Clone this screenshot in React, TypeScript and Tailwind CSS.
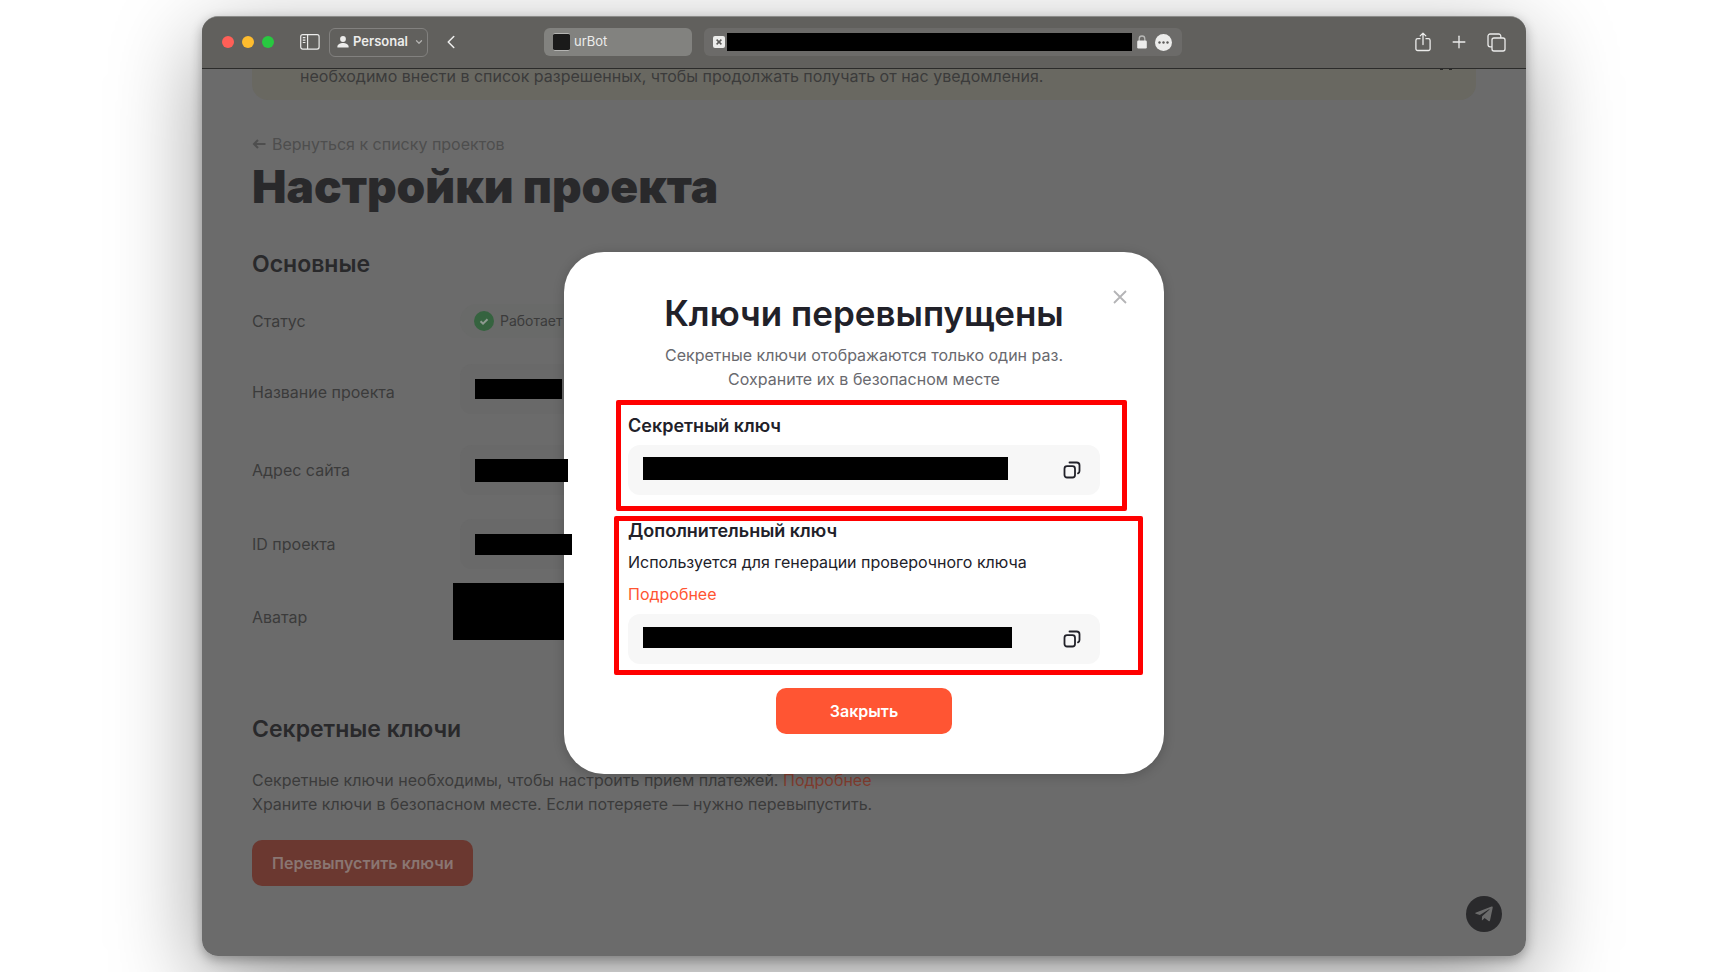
import React from 'react';
import { ChevronDown, ChevronLeft, Plus } from 'lucide-react';
import { FaTelegramPlane } from 'react-icons/fa';

const CopyIcon: React.FC = () => (
  <svg width="18" height="18" viewBox="0 0 18 18" fill="none" stroke="currentColor" strokeWidth="1.8" strokeLinecap="round" strokeLinejoin="round">
    <rect x="1.5" y="5.2" width="10.5" height="11.3" rx="2.5" />
    <path d="M6.500 1.500h7.200a2.800 2.800 0 0 1 2.800 2.800v5.800a2.600 2.600 0 0 1-1.500 2.300" />
  </svg>
);

const Toolbar: React.FC = () => (
  <header className="flex h-[52px] items-center border-b border-[#2b2b2a] bg-[#61605d] pb-px pl-5 pr-5 text-[#ececeb]">
    <div className="flex gap-2">
      <span className="h-3 w-3 rounded-full bg-[#ff5f57]" />
      <span className="h-3 w-3 rounded-full bg-[#febc2e]" />
      <span className="h-3 w-3 rounded-full bg-[#28c840]" />
    </div>
    <button aria-label="Sidebar" className="ml-[26px]">
      <svg width="20" height="16" viewBox="0 0 20 16" fill="none" stroke="currentColor" strokeWidth="1.2">
        <rect x="0.7" y="0.7" width="18.4" height="14.4" rx="2" />
        <path d="M7.6 1v14M2.8 3.7h2.6M2.8 6.1h2.6M2.8 8.5h2.6" />
      </svg>
    </button>
    <button className="ml-[9px] flex h-[29px] w-[99px] items-center rounded-md border border-[#82817f] pl-[7px] text-[13px] font-semibold">
      <svg width="12" height="12" viewBox="0 0 12 12" fill="currentColor" className="mr-1">
        <circle cx="6" cy="3" r="2.9" />
        <path d="M0.4 11.6v-1C0.4 8.3 3.4 7 6 7s5.6 1.3 5.6 3.6v1z" />
      </svg>
      Personal
      <ChevronDown className="ml-[6px] h-[10px] w-[10px] text-[#b3b2b0]" strokeWidth={3} />
    </button>
    <button aria-label="Back" className="ml-3">
      <ChevronLeft className="h-[22px] w-[22px]" strokeWidth={1.7} />
    </button>
    <button className="ml-[82px] flex h-7 w-[148px] items-center gap-1 rounded-md bg-[#82827f] pl-[9px] text-[13px]">
      <span className="h-[18px] w-[17px] rounded-xs border-y border-[#b5b5b3] bg-[#1a1a1a]" />
      urBot
    </button>
    <div className="ml-3 flex h-7 w-[478px] items-center rounded-md bg-[#6c6b69] pl-[9px]">
      <svg width="12" height="12" viewBox="0 0 12 12">
        <rect width="12" height="12" rx="2" fill="#ececeb" />
        <path d="M3.6 3.6l4.8 4.8M8.4 3.6l-4.8 4.8" stroke="#5c5b59" strokeWidth="1.5" />
      </svg>
      <input aria-label="Address" readOnly className="ml-[2px] h-[18px] w-[405px] bg-black" />
      <svg width="10" height="14" viewBox="0 0 10 14" className="ml-[5px]">
        <path d="M2.2 6V3.8a2.8 2.8 0 0 1 5.6 0V6" fill="none" stroke="#b9b9b7" strokeWidth="1.3" />
        <rect x="0.2" y="5.6" width="9.6" height="7.9" rx="1.2" fill="#ececeb" />
      </svg>
      <svg width="17" height="17" viewBox="0 0 17 17" className="ml-2">
        <circle cx="8.5" cy="8.5" r="8.5" fill="#ececeb" />
        <g fill="#5c5b59">
          <circle cx="4.5" cy="8.5" r="1.2" />
          <circle cx="8.5" cy="8.5" r="1.2" />
          <circle cx="12.5" cy="8.5" r="1.2" />
        </g>
      </svg>
    </div>
    <div className="ml-auto flex items-center gap-[18px]">
      <button aria-label="Share">
        <svg width="16" height="20" viewBox="0 0 16 20" fill="none" stroke="currentColor" strokeWidth="1.3" strokeLinecap="round" strokeLinejoin="round">
          <path d="M5 6.7H2.7a1.8 1.8 0 0 0-1.800 1.800v8.200a1.800 1.800 0 0 0 1.800 1.800h10.600a1.800 1.800 0 0 0 1.800-1.800V8.500a1.800 1.800 0 0 0-1.800-1.800H11M8 12.500V1.200M5.200 3.900L8 1.100l2.800 2.800" />
        </svg>
      </button>
      <button aria-label="New tab">
        <Plus className="h-5 w-5" strokeWidth={1.6} />
      </button>
      <button aria-label="Tab overview">
        <svg width="19" height="19" viewBox="0 0 19 19" fill="none" stroke="currentColor" strokeWidth="1.3">
          <rect x="5" y="5" width="13" height="13" rx="2" />
          <path d="M5 13.800H3.200a2.200 2.200 0 0 1-2.200-2.200V3.200A2.200 2.200 0 0 1 3.200 1h8.400a2.200 2.200 0 0 1 2.200 2.200V5" />
        </svg>
      </button>
    </div>
  </header>
);

const Settings: React.FC = () => (
  <main className="px-[50px] pb-[70px] text-[#3b3b3b]">
    <div className="flex justify-between rounded-b-2xl bg-[#696861] pb-[17px] pl-12 pr-6">
      <p className="leading-[14px]">необходимо внести в список разрешенных, чтобы продолжать получать от нас уведомления.</p>
      <span className="h-px w-3 border-x-3 border-[#2b2b2a]" />
    </div>

    <a href="#" className="mt-8 flex items-center gap-[6px] leading-6 text-[#4e4e4e]">
      <svg width="14" height="10" viewBox="0 0 14 10" fill="none" stroke="currentColor" strokeWidth="2">
        <path d="M13.500 5H2M6 1L2 5l4 4" />
      </svg>
      Вернуться к списку проектов
    </a>
    <h1 className="mt-[6px] text-[46px] font-black leading-[48px] text-[#29292b]">
      Настройки проекта
    </h1>

    <h2 className="mt-[38px] text-[23px] font-semibold leading-8 text-[#29292b]">Основные</h2>
    <div className="mt-6 flex h-[34px] items-center">
      <span className="w-[208px]">Статус</span>
      <span className="flex h-full items-center gap-[6px] rounded-full bg-[#696a69] pl-[14px] pr-4 text-sm">
        <svg width="20" height="20" viewBox="0 0 20 20">
          <circle cx="10" cy="10" r="10" fill="#35633f" />
          <path d="M6.500 10.300l2.500 2.300 4.500-4.400" fill="none" stroke="#8d9a90" strokeWidth="2" />
        </svg>
        Работает
      </span>
    </div>
    <div className="mt-[26px] flex h-14">
      <label htmlFor="name" className="w-[208px] self-center">Название проекта</label>
      <div className="flex h-[50px] w-[420px] items-center rounded-xl bg-[#696969] pl-[15px]">
        <input id="name" readOnly className="relative z-20 h-5 w-[87px] bg-black" />
      </div>
    </div>
    <div className="mt-[25px] flex items-center">
      <label htmlFor="site" className="w-[208px]">Адрес сайта</label>
      <div className="flex h-[50px] w-[420px] items-center rounded-xl bg-[#696969] pl-[15px]">
        <input id="site" readOnly className="relative z-20 h-[23px] w-[93px] bg-black" />
      </div>
    </div>
    <div className="mt-6 flex items-center">
      <label htmlFor="project-id" className="w-[208px]">ID проекта</label>
      <div className="flex h-[50px] w-[420px] items-center rounded-xl bg-[#696969] pl-[15px]">
        <input id="project-id" readOnly className="relative z-20 h-[21px] w-[97px] bg-black" />
      </div>
    </div>
    <div className="mt-[14px] flex h-[68px]">
      <span className="w-[201px] self-center">Аватар</span>
      <div className="h-[57px] w-[111px] bg-black" />
    </div>

    <h2 className="mt-[62px] text-[23px] font-semibold leading-8 text-[#29292b]">Секретные ключи</h2>
    <p className="mt-[23px] leading-6">
      Секретные ключи необходимы, чтобы настроить прием платежей.{' '}
      <a href="#" className="text-[#7f3b2e]">Подробнее</a>
      <br />
      Храните ключи в безопасном месте. Если потеряете — нужно перевыпустить.
    </p>
    <button className="mt-6 h-[46px] rounded-[10px] bg-[#6b3830] px-5 font-semibold text-[#8a7672]">
      Перевыпустить ключи
    </button>
  </main>
);

const KeysDialog: React.FC = () => (
  <div role="dialog" aria-labelledby="keys-title" className="relative w-full max-w-[600px] rounded-[40px] bg-white pb-10 pt-[39px] text-[#212129] shadow-[0_2px_12px_rgba(0,0,0,0.2)]">
    <button aria-label="Закрыть окно" className="absolute right-[35px] top-9 p-[2px] text-[#b4b4b6]">
      <svg width="14" height="14" viewBox="0 0 14 14" fill="none" stroke="currentColor" strokeWidth="1.8">
        <path d="M1 1l12 12M13 1L1 13" />
      </svg>
    </button>
    <h2 id="keys-title" className="text-center text-[35px] font-semibold leading-[44px]">Ключи перевыпущены</h2>
    <p className="mt-2 text-center leading-6 text-[#69696e]">
      Секретные ключи отображаются только один раз.
      <br />
      Сохраните их в безопасном месте
    </p>

    <section className="ml-[52px] mr-[37px] mt-[9px] rounded-xs border-5 border-[#ff0000] pb-[11px] pl-[7px] pr-[22px] pt-[11px]">
      <label htmlFor="secret" className="block text-lg font-semibold leading-5">Секретный ключ</label>
      <div className="mt-[9px] flex h-[50px] items-center justify-between rounded-xl bg-[#f7f7f7] pl-[15px] pr-[19px]">
        <input id="secret" readOnly className="mb-[3px] h-[23px] w-[365px] bg-black" />
        <button aria-label="Скопировать"><CopyIcon /></button>
      </div>
    </section>

    <section className="ml-[50px] mr-[21px] mt-[5px] rounded-xs border-5 border-[#ff0000] pb-[6px] pl-[9px] pr-[38px]">
      <label htmlFor="extra" className="block text-lg font-semibold leading-5">Дополнительный ключ</label>
      <p className="mt-[9px] leading-6">Используется для генерации проверочного ключа</p>
      <a href="#" className="mt-2 block leading-6 text-[#ff5533]">Подробнее</a>
      <div className="mt-2 flex h-[50px] items-center justify-between rounded-xl bg-[#f7f7f7] pl-[15px] pr-[19px]">
        <input id="extra" readOnly className="mb-[3px] h-[21px] w-[369px] bg-black" />
        <button aria-label="Скопировать"><CopyIcon /></button>
      </div>
    </section>

    <button className="mx-auto mt-[13px] block h-[46px] w-44 rounded-[10px] bg-[#ff5533] font-semibold text-white">
      Закрыть
    </button>
  </div>
);

const App: React.FC = () => {
  return (
    <div className="min-h-screen overflow-hidden bg-white py-4 font-[Inter,sans-serif] text-base">
      <div className="mx-auto w-full max-w-[1324px] rounded-2xl shadow-[0_26px_90px_rgba(0,0,0,0.4),0_4px_12px_rgba(0,0,0,0.3)]">
        <div className="overflow-hidden rounded-2xl border-t border-[#8b8b89] bg-[#6b6b6b]">
          <Toolbar />
          <div className="relative">
            <Settings />
            <a href="#" aria-label="Telegram" className="absolute bottom-6 right-6 flex h-9 w-9 items-center justify-center rounded-full bg-[#2a2a2c] text-[#6b6b6b]">
              <FaTelegramPlane className="h-5 w-5" />
            </a>
            <div className="absolute inset-0 z-10 flex items-center justify-center">
              <KeysDialog />
            </div>
          </div>
        </div>
      </div>
    </div>
  );
};

export default App;
